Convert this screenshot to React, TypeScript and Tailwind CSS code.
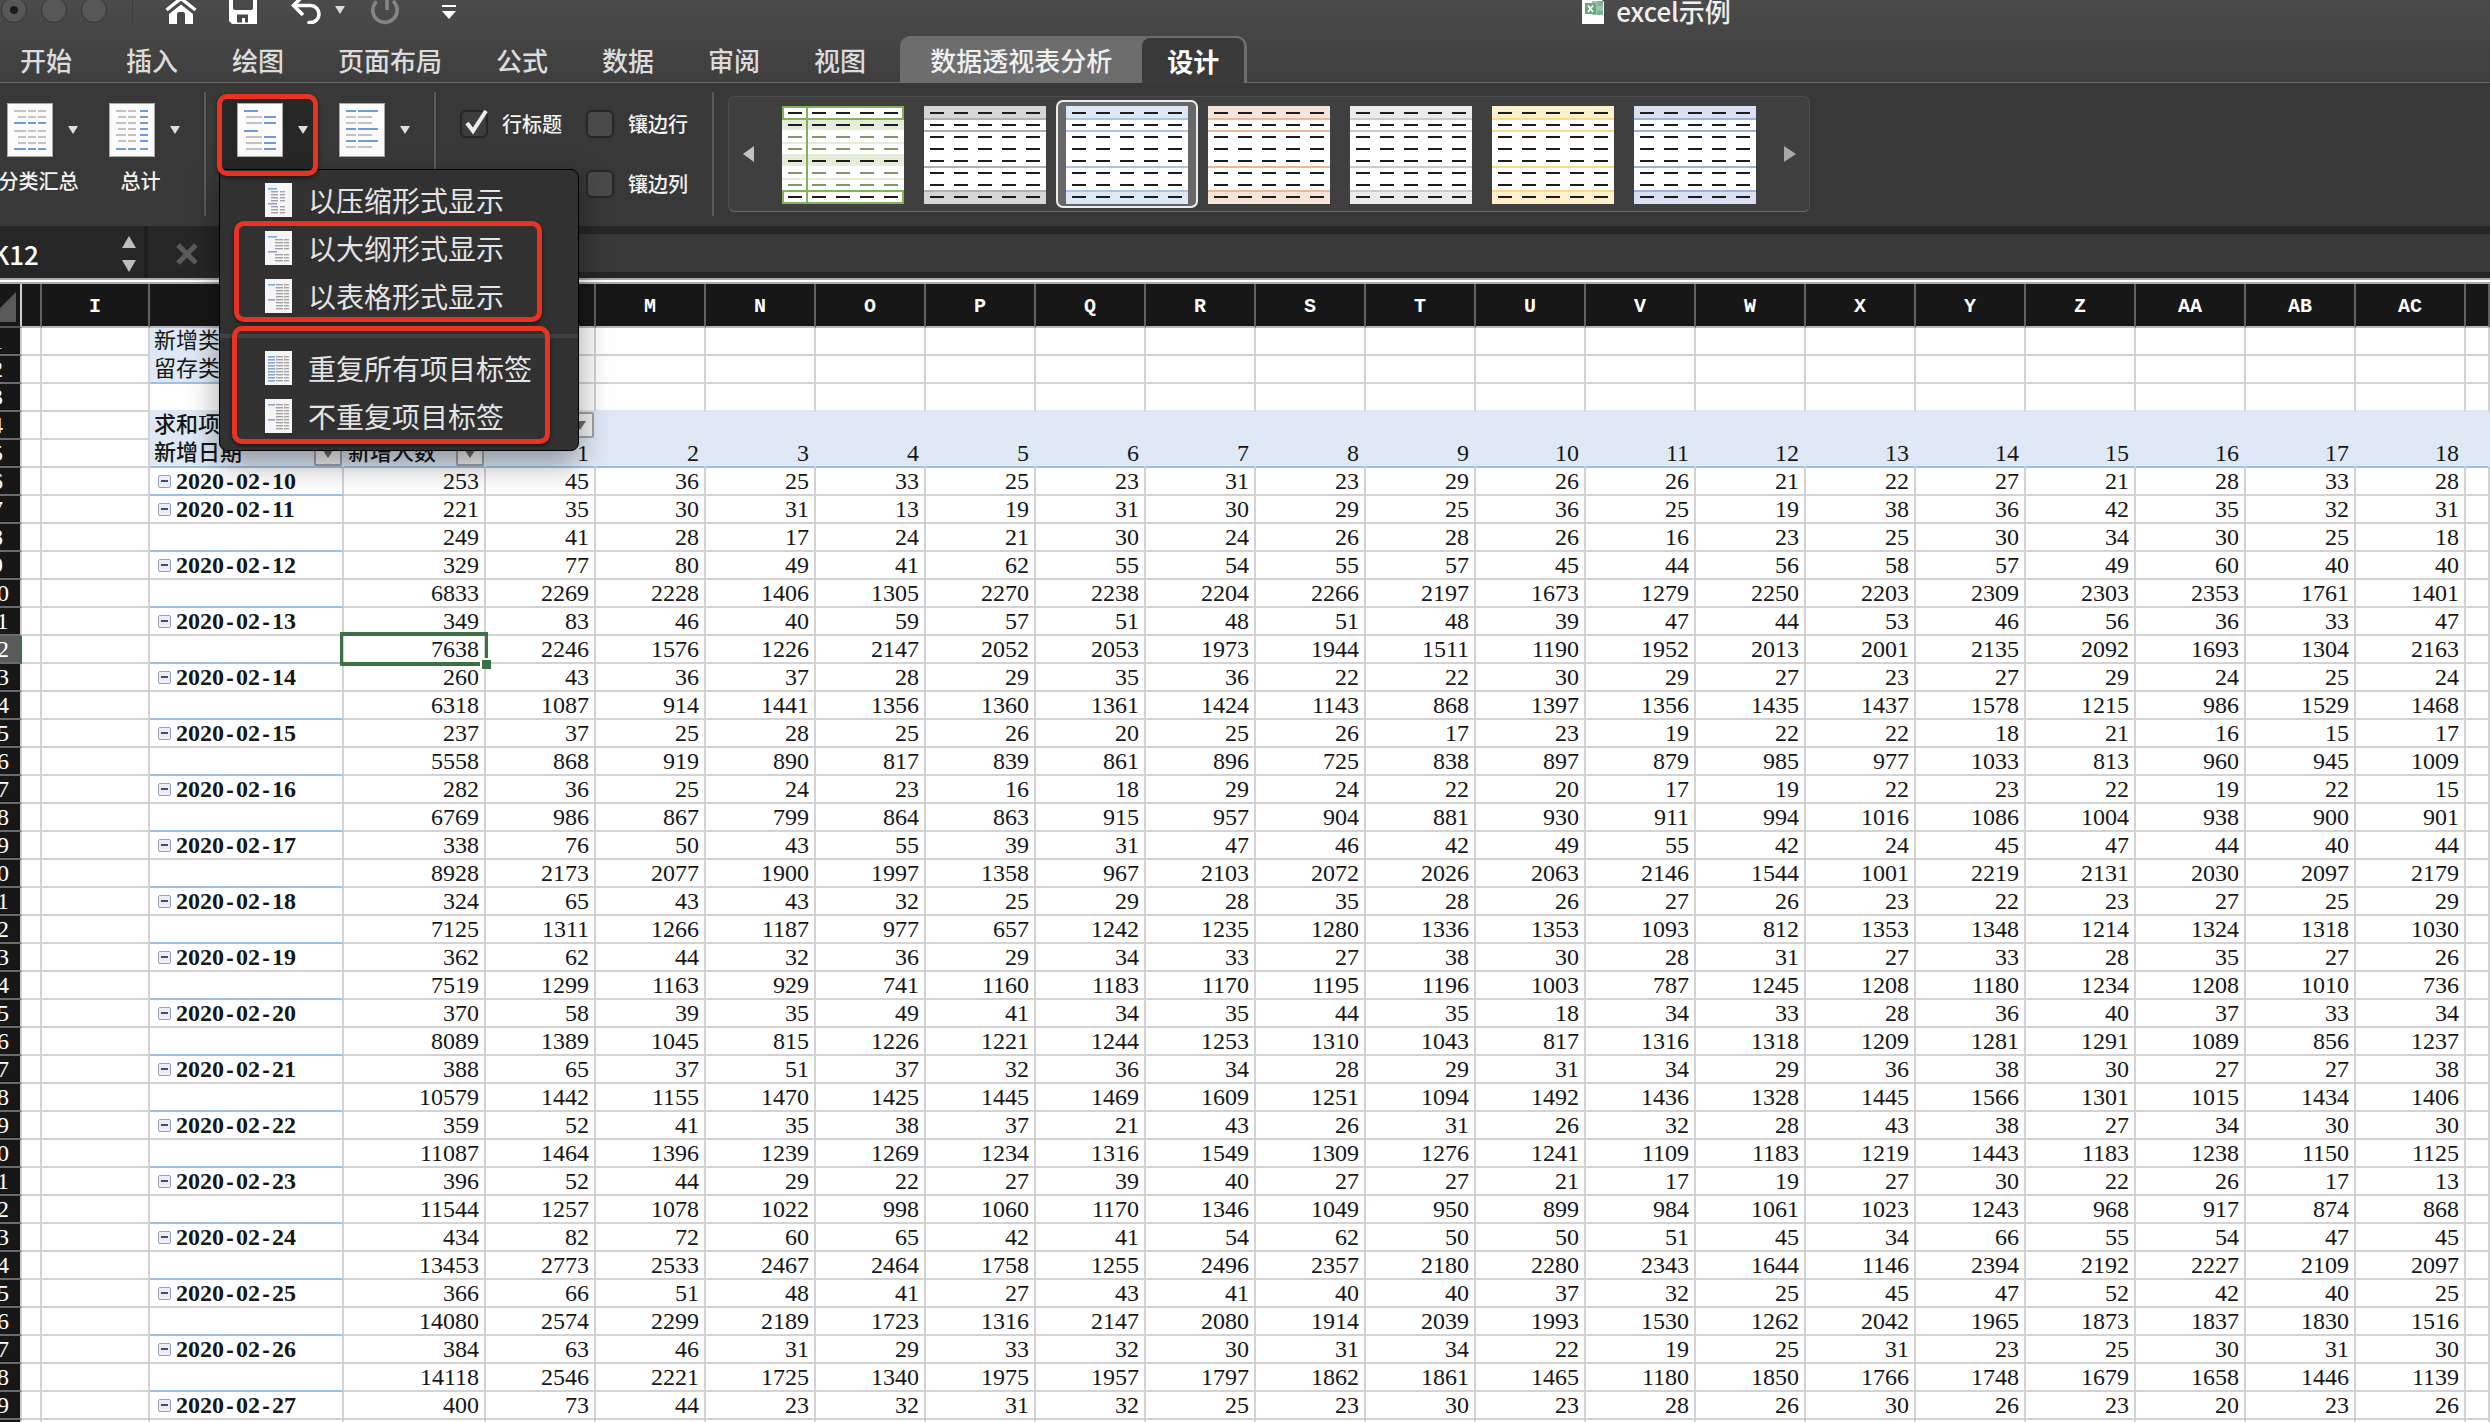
import type { ReactNode } from "react";

const COLUMNS = ["H", "I", "J", "K", "L", "M", "N", "O", "P", "Q", "R", "S", "T", "U", "V", "W", "X", "Y", "Z", "AA", "AB", "AC", "AD"];

const DATA = `253 45 36 25 33 25 23 31 23 29 26 26 21 22 27 21 28 33 28
221 35 30 31 13 19 31 30 29 25 36 25 19 38 36 42 35 32 31
249 41 28 17 24 21 30 24 26 28 26 16 23 25 30 34 30 25 18
329 77 80 49 41 62 55 54 55 57 45 44 56 58 57 49 60 40 40
6833 2269 2228 1406 1305 2270 2238 2204 2266 2197 1673 1279 2250 2203 2309 2303 2353 1761 1401
349 83 46 40 59 57 51 48 51 48 39 47 44 53 46 56 36 33 47
7638 2246 1576 1226 2147 2052 2053 1973 1944 1511 1190 1952 2013 2001 2135 2092 1693 1304 2163
260 43 36 37 28 29 35 36 22 22 30 29 27 23 27 29 24 25 24
6318 1087 914 1441 1356 1360 1361 1424 1143 868 1397 1356 1435 1437 1578 1215 986 1529 1468
237 37 25 28 25 26 20 25 26 17 23 19 22 22 18 21 16 15 17
5558 868 919 890 817 839 861 896 725 838 897 879 985 977 1033 813 960 945 1009
282 36 25 24 23 16 18 29 24 22 20 17 19 22 23 22 19 22 15
6769 986 867 799 864 863 915 957 904 881 930 911 994 1016 1086 1004 938 900 901
338 76 50 43 55 39 31 47 46 42 49 55 42 24 45 47 44 40 44
8928 2173 2077 1900 1997 1358 967 2103 2072 2026 2063 2146 1544 1001 2219 2131 2030 2097 2179
324 65 43 43 32 25 29 28 35 28 26 27 26 23 22 23 27 25 29
7125 1311 1266 1187 977 657 1242 1235 1280 1336 1353 1093 812 1353 1348 1214 1324 1318 1030
362 62 44 32 36 29 34 33 27 38 30 28 31 27 33 28 35 27 26
7519 1299 1163 929 741 1160 1183 1170 1195 1196 1003 787 1245 1208 1180 1234 1208 1010 736
370 58 39 35 49 41 34 35 44 35 18 34 33 28 36 40 37 33 34
8089 1389 1045 815 1226 1221 1244 1253 1310 1043 817 1316 1318 1209 1281 1291 1089 856 1237
388 65 37 51 37 32 36 34 28 29 31 34 29 36 38 30 27 27 38
10579 1442 1155 1470 1425 1445 1469 1609 1251 1094 1492 1436 1328 1445 1566 1301 1015 1434 1406
359 52 41 35 38 37 21 43 26 31 26 32 28 43 38 27 34 30 30
11087 1464 1396 1239 1269 1234 1316 1549 1309 1276 1241 1109 1183 1219 1443 1183 1238 1150 1125
396 52 44 29 22 27 39 40 27 27 21 17 19 27 30 22 26 17 13
11544 1257 1078 1022 998 1060 1170 1346 1049 950 899 984 1061 1023 1243 968 917 874 868
434 82 72 60 65 42 41 54 62 50 50 51 45 34 66 55 54 47 45
13453 2773 2533 2467 2464 1758 1255 2496 2357 2180 2280 2343 1644 1146 2394 2192 2227 2109 2097
366 66 51 48 41 27 43 41 40 40 37 32 25 45 47 52 42 40 25
14080 2574 2299 2189 1723 1316 2147 2080 1914 2039 1993 1530 1262 2042 1965 1873 1837 1830 1516
384 63 46 31 29 33 32 30 31 34 22 19 25 31 23 25 30 31 30
14118 2546 2221 1725 1340 1975 1957 1797 1862 1861 1465 1180 1850 1766 1748 1679 1658 1446 1139
400 73 44 23 32 31 32 25 23 30 23 28 26 30 26 23 20 23 26`
  .split("\n")
  .map((line) => line.split(" "));

/* ---------- icons ---------- */

type Bar = [x: number, y: number, w: number, blue?: boolean];

const subtotalBars: Bar[] = [7, 13, 19, 27, 33, 39, 45].flatMap((y): Bar[] => {
  const blue = y === 19 || y === 45;
  const wide = blue || y === 7 || y === 27;
  return [wide ? [7, y, 12, blue] : [11, y, 8], [21, y, 8, blue], [31, y, 8, blue]];
});

const totalBars: Bar[] = [7, 13, 19, 25, 31, 37, 45].flatMap((y, i): Bar[] => {
  const last = y === 45;
  return [i % 2 ? [9, y, 8] : [7, y, 10, last], [19, y, 8, last], [31, y, 8, true]];
});

const layoutBars: Bar[] = [
  [7, 7, 14, true],
  [7, 27, 14, true],
  ...[13, 19, 33, 39, 45].flatMap((y): Bar[] => [[9, y, 16], [27, y, 12, true]]),
];

const blankRowBars: Bar[] = [7, 13, 19, 25, 31, 37, 43].flatMap((y): Bar[] => {
  const blue = y === 7 || y === 25 || y === 37;
  return [[7, y, 10, blue], [19, y, blue ? 20 : 14, blue]];
});

function PageIcon({ bars }: { bars: Bar[] }) {
  return (
    <svg width="46" height="54" viewBox="0 0 46 54" aria-hidden="true" className="shrink-0">
      <rect x="0.5" y="0.5" width="45" height="53" fill="#fbfbfb" stroke="#a9a9a9" />
      {bars.map(([x, y, w, blue], i) => (
        <rect key={i} x={x} y={y} width={w} height="2" fill={blue ? "#6f9bd8" : "#c3c3c3"} />
      ))}
    </svg>
  );
}

type MenuBars = { blue: [number, number][]; blueWidth: number; gray: number[]; cols: [number, number][] };

const TABULAR_ROWS = [5, 8, 11, 14, 17, 20, 23, 26, 29];

const menuIcons: Record<string, MenuBars> = {
  compact: { blue: [[3, 5], [3, 20]], blueWidth: 9, gray: [8, 11, 14, 17, 23, 26, 29], cols: [[6, 7], [15, 5]] },
  outline: { blue: [[3, 5], [3, 20]], blueWidth: 9, gray: [8, 11, 14, 17, 23, 26, 29], cols: [[10, 8], [19, 5]] },
  tabular: { blue: [[3, 5], [3, 20]], blueWidth: 7, gray: TABULAR_ROWS, cols: [[11, 7], [19, 5]] },
  repeat: { blue: TABULAR_ROWS.map((y) => [3, y]), blueWidth: 7, gray: TABULAR_ROWS, cols: [[11, 7], [19, 5]] },
};

function MenuIcon({ kind }: { kind: string }) {
  const bars = menuIcons[kind];
  return (
    <svg width="27" height="34" viewBox="0 0 27 34" aria-hidden="true" className="shrink-0">
      <rect width="27" height="34" fill="#f6f6f6" />
      {bars.gray.flatMap((y) =>
        bars.cols.map(([x, w]) => <rect key={`${x}-${y}`} x={x} y={y} width={w} height="1.4" fill="#a2a2a2" />),
      )}
      {bars.blue.map(([x, y]) => (
        <rect key={y} x={x} y={y} width={bars.blueWidth} height="1.6" fill="#7fa6e0" />
      ))}
    </svg>
  );
}

function Caret() {
  return (
    <svg width="10" height="8" viewBox="0 0 10 8" aria-hidden="true" className="shrink-0">
      <path d="M0 0h10L5 8z" fill="#dedede" />
    </svg>
  );
}

function HomeIcon() {
  return (
    <svg width="32" height="28" viewBox="0 0 32 28" fill="none" aria-hidden="true">
      <path d="M1.5 14 16 2.5 30.5 14" stroke="#fff" strokeWidth="3.4" />
      <path d="M4 18 16 8.5 28 18v10h-8V18a2 2 0 0 0-2-2h-4a2 2 0 0 0-2 2v10H4z" fill="#fff" />
    </svg>
  );
}

function SaveIcon() {
  return (
    <svg width="28" height="28" viewBox="0 0 28 28" aria-hidden="true">
      <path
        d="M0 0h28v28H3l-3-3zM4 2v10a2 2 0 0 0 2 2h16a2 2 0 0 0 2-2V2zM8 26.5h5V22h3v4.500h3V18.500H8z"
        fill="#fff"
        fillRule="evenodd"
      />
    </svg>
  );
}

function UndoIcon() {
  return (
    <svg width="31" height="28" viewBox="0 0 31 28" fill="none" stroke="#fff" strokeWidth="3.6" aria-hidden="true">
      <path d="M12 0 2.5 9.5 12 19" />
      <path d="M3 9.5h16.5a8.5 8.5 0 0 1 0 17H18" strokeLinecap="round" />
    </svg>
  );
}

function RedoIcon() {
  return (
    <svg width="28" height="32" viewBox="0 0 28 32" fill="none" stroke="#858585" strokeWidth="3.6" aria-hidden="true">
      <path d="M4.5 8.5A12.2 12.2 0 1 0 23 8" strokeLinecap="round" />
      <path d="M16 16V4h12" />
    </svg>
  );
}

function ExcelFileIcon() {
  return (
    <svg width="22" height="28" viewBox="0 0 22 28" aria-hidden="true">
      <path d="M0 0h16l6 6v22H0z" fill="#fff" />
      <path d="M10 5h11v14H10z" fill="#9cc8a9" />
      <path d="M15.5 5H21v5h-5.5zM15.5 14.5H21V19h-5.5z" fill="#7db38d" />
      <rect x="3" y="7" width="11" height="11" fill="#68a67b" />
      <path d="m6 9.5 5 6.5m0-6.5L6 16" stroke="#fff" strokeWidth="1.7" />
    </svg>
  );
}

/* ---------- title bar and tabs ---------- */

function TitleBar() {
  return (
    <div className="flex h-9 items-start">
      <div className="flex h-5 items-center pl-px">
        <div className="flex items-center gap-[14px]">
          <button aria-label="关闭" className="flex size-[26px] items-center justify-center rounded-full border border-[#363636] bg-[#575757]">
            <span className="size-2 rounded-full bg-[#1a1a1a]" />
          </button>
          <button aria-label="最小化" className="size-[26px] rounded-full border border-[#363636] bg-[#575757]" />
          <button aria-label="缩放" className="size-[26px] rounded-full border border-[#363636] bg-[#575757]" />
        </div>
        <span className="ml-[25px] h-8 w-px bg-[#3c3c3c]" />
        <button aria-label="主页" className="ml-8"><HomeIcon /></button>
        <button aria-label="保存" className="ml-8"><SaveIcon /></button>
        <button aria-label="撤消" className="ml-[34px]"><UndoIcon /></button>
        <button aria-label="撤消选项" className="ml-[13px]"><Caret /></button>
        <button aria-label="恢复" className="ml-[26px]"><RedoIcon /></button>
        <button aria-label="自定义工具栏" className="ml-[43px]">
          <svg width="14" height="18" viewBox="0 0 14 18" fill="#fff" aria-hidden="true">
            <path d="M0 4h14v2H0zM0 10h14l-7 8z" />
          </svg>
        </button>
      </div>
      <h1 className="flex h-5 flex-1 items-center justify-center gap-3 pl-[367px] text-[26px] font-medium whitespace-nowrap text-[#efefef]">
        <ExcelFileIcon />
        excel示例
      </h1>
    </div>
  );
}

function Tabs() {
  return (
    <nav className="flex h-[47px] items-stretch border-b border-[#686868] pl-5 text-[26px] leading-[48px] font-medium text-[#dcdcdc]">
      <div className="flex gap-[54px] pr-[34px]">
        {["开始", "插入", "绘图", "页面布局", "公式", "数据", "审阅", "视图"].map((name) => (
          <button key={name} className="whitespace-nowrap">{name}</button>
        ))}
      </div>
      <div className="-mb-px flex rounded-t-[10px] bg-[#6d6d6d] pr-[3px]">
        <button className="px-[30px] whitespace-nowrap text-[#f0f0f0]">数据透视表分析</button>
        <button className="mt-[2px] rounded-t-lg bg-[#3a3a3a] px-[25px] leading-[44px] font-bold whitespace-nowrap text-white">设计</button>
      </div>
    </nav>
  );
}

/* ---------- ribbon ---------- */

function Separator() {
  return <span className="mt-[9px] mb-[10px] w-[2px] shrink-0 self-stretch bg-[#5b5b5b]" />;
}

function RibbonButton({ bars, label }: { bars: Bar[]; label: string }) {
  return (
    <button className="mt-5 flex w-[71px] shrink-0 flex-col items-center gap-[10px]">
      <span className="flex items-center gap-[15px]">
        <PageIcon bars={bars} />
        <Caret />
      </span>
      <span className="pr-2 text-[20px] leading-7 font-medium whitespace-nowrap text-[#f2f2f2]">{label}</span>
    </button>
  );
}

function Marker({ className }: { className: string }) {
  return (
    <span
      className={`pointer-events-none absolute rounded-[10px] border-[5px] border-[#e83323] shadow-[0_2px_4px_rgba(0,0,0,0.5)] ${className}`}
    />
  );
}

function MenuItem({ kind, children }: { kind: string; children: ReactNode }) {
  return (
    <button role="menuitem" className="flex h-12 w-full items-center gap-4 pl-[45px] text-left text-[28px] leading-[48px] whitespace-nowrap text-[#e4e4e4]">
      <MenuIcon kind={kind} />
      {children}
    </button>
  );
}

function LayoutDropdown() {
  return (
    <div className="relative z-10 mt-3 ml-[13px] shrink-0">
      <button aria-label="报表布局" aria-expanded="true" className="flex h-[80px] items-start gap-[15px] rounded-lg bg-[#272727] pt-2 pr-[7px] pl-[18px]">
        <PageIcon bars={layoutBars} />
        <span className="flex h-[54px] items-center"><Caret /></span>
      </button>
      <div role="menu" className="absolute top-[74px] left-0 w-[360px] rounded-tr-lg rounded-b-lg border border-black bg-[#313131] pt-[6px] pb-[10px] shadow-[0_12px_32px_rgba(0,0,0,0.38)]">
        <MenuItem kind="compact">以压缩形式显示</MenuItem>
        <div className="relative">
          <MenuItem kind="outline">以大纲形式显示</MenuItem>
          <MenuItem kind="tabular">以表格形式显示</MenuItem>
          <Marker className="-top-[3px] -bottom-[2px] left-[14px] w-[308px]" />
        </div>
        <div className="mt-[14px] mb-[6px] h-1 bg-[#424242]" />
        <div className="relative">
          <MenuItem kind="repeat">重复所有项目标签</MenuItem>
          <MenuItem kind="tabular">不重复项目标签</MenuItem>
          <Marker className="-top-[18px] -bottom-1 left-3 w-[318px]" />
        </div>
      </div>
      <Marker className="-top-px -left-[2px] h-[82px] w-[101px]" />
    </div>
  );
}

function CheckOption({ label, checked = false }: { label: string; checked?: boolean }) {
  return (
    <label className="flex h-7 items-center gap-[14px] text-[20px] leading-7 font-medium whitespace-nowrap text-[#f4f4f4]">
      <span className="relative flex">
        <input
          type="checkbox"
          defaultChecked={checked}
          className="size-7 appearance-none rounded-[6px] border-2 border-[#262626] bg-[#4a4a4a] checked:bg-[#3d3d3d]"
        />
        {checked && (
          <svg width="28" height="28" viewBox="0 0 28 28" fill="none" aria-hidden="true" className="pointer-events-none absolute inset-0">
            <path d="m7 13 6 8L26 1" stroke="#ececec" strokeWidth="4" />
          </svg>
        )}
      </span>
      {label}
    </label>
  );
}

const styleThumbs = [
  { name: "灰色", fill: "#d6d6d6", line: "#b0b0b0" },
  { name: "蓝色", fill: "#dde8f5", line: "#a9c4e4", selected: true },
  { name: "橙色", fill: "#f8e3d8", line: "#edb898" },
  { name: "浅灰", fill: "#ebebeb", line: "#cbcbcb" },
  { name: "金色", fill: "#fdf0cd", line: "#fadb86" },
  { name: "靛蓝", fill: "#d9e0f1", line: "#9db1da" },
];

const THUMB_ROWS = [0, 1, 2, 3, 4, 5, 6, 7];
const THUMB_COLS = [0, 1, 2, 3, 4];

function Dashes({ light = [] }: { light?: number[] }) {
  return (
    <>
      {THUMB_ROWS.flatMap((r) =>
        THUMB_COLS.map((c) => (
          <rect key={`${r}-${c}`} x={6 + c * 24} y={6 + r * 12} width="14" height="2" fill={light.includes(r) ? "#7d9a62" : "#1c1c1c"} />
        )),
      )}
    </>
  );
}

function Thumb({ fill, line }: { fill: string; line: string }) {
  return (
    <svg width="122" height="98" viewBox="0 0 122 98" aria-hidden="true">
      <rect width="122" height="98" fill="#fff" />
      <rect width="122" height="12" fill={fill} />
      <rect y="86" width="122" height="12" fill={fill} />
      {[12, 24, 60, 84].map((y) => (
        <rect key={y} y={y} width="122" height="2" fill={line} />
      ))}
      <Dashes />
    </svg>
  );
}

function GreenThumb() {
  return (
    <svg width="122" height="98" viewBox="0 0 122 98" aria-hidden="true">
      <rect width="122" height="98" fill="#fff" />
      <rect y="13" width="122" height="11" fill="#e3edda" />
      <rect y="48" width="122" height="12" fill="#e3edda" />
      <rect y="36" width="122" height="2" fill="#e3edda" />
      <rect y="72" width="122" height="2" fill="#e3edda" />
      <path d="M1 1h120v12H1zM1 85h120v12H1zM25 1v96" fill="none" stroke="#83b25d" strokeWidth="2" />
      <Dashes light={[2, 3, 5, 6]} />
    </svg>
  );
}

function Gallery() {
  return (
    <div className="mt-[13px] ml-[14px] flex h-[116px] shrink-0 items-center rounded-[6px] border border-[#4c4c4c] border-b-[#666] bg-[#3f3f3f] pr-[13px] pl-[14px]">
      <button aria-label="上一组样式">
        <svg width="11" height="16" viewBox="0 0 11 16" aria-hidden="true"><path d="M11 0v16L0 8z" fill="#c2c2c2" /></svg>
      </button>
      <div className="mx-[18px] flex">
        <button aria-label="绿色" className="flex h-[108px] w-[142px] items-center justify-center pt-[2px]"><GreenThumb /></button>
        {styleThumbs.map((t) => (
          <button
            key={t.name}
            aria-label={t.name}
            aria-pressed={!!t.selected}
            className={`flex h-[108px] w-[142px] items-center justify-center pt-[2px] ${t.selected ? "rounded-[7px] border-2 border-[#ededed] bg-[#676767]" : ""}`}
          >
            <Thumb fill={t.fill} line={t.line} />
          </button>
        ))}
      </div>
      <button aria-label="下一组样式">
        <svg width="12" height="16" viewBox="0 0 12 16" aria-hidden="true"><path d="M0 0v16l12-8z" fill="#a8a8a8" /></svg>
      </button>
    </div>
  );
}

function Ribbon() {
  return (
    <div className="flex h-[143px] shrink-0 items-start bg-[#383838] pl-[7px]">
      <div className="mr-6 flex gap-[31px]">
        <RibbonButton bars={subtotalBars} label="分类汇总" />
        <RibbonButton bars={totalBars} label="总计" />
      </div>
      <Separator />
      <LayoutDropdown />
      <button aria-label="空行" className="mt-5 mr-6 ml-6 flex shrink-0 items-center gap-[15px]">
        <PageIcon bars={blankRowBars} />
        <Caret />
      </button>
      <Separator />
      <div className="mt-[27px] mr-6 ml-6 grid shrink-0 grid-cols-2 gap-x-6 gap-y-8">
        <CheckOption label="行标题" checked />
        <CheckOption label="镶边行" />
        <CheckOption label="列标题" checked />
        <CheckOption label="镶边列" />
      </div>
      <Separator />
      <Gallery />
    </div>
  );
}

/* ---------- formula bar ---------- */

function FormulaBar() {
  return (
    <>
      <div className="flex h-[52px] shrink-0 bg-[#262626]">
        <div className="flex w-[148px] shrink-0 items-center border-r-4 border-[#1f1f1f] pt-1">
          <input
            aria-label="名称框"
            defaultValue="K12"
            className="-ml-2 w-0 flex-1 bg-transparent text-[26px] leading-8 font-medium text-white outline-none"
          />
          <div className="mr-2 flex flex-col gap-3">
            <button aria-label="上一个">
              <svg width="14" height="12" viewBox="0 0 14 12" className="block" aria-hidden="true"><path d="M7 0l7 12H0z" fill="#bdbdbd" /></svg>
            </button>
            <button aria-label="下一个">
              <svg width="14" height="12" viewBox="0 0 14 12" className="block" aria-hidden="true"><path d="M0 0h14L7 12z" fill="#bdbdbd" /></svg>
            </button>
          </div>
        </div>
        <button aria-label="取消" className="ml-7 pt-1">
          <svg width="22" height="22" viewBox="0 0 22 22" aria-hidden="true">
            <path d="M2 2l18 18M20 2 2 20" stroke="#5b5b5b" strokeWidth="5" />
          </svg>
        </button>
        <input aria-label="编辑栏" className="mt-2 mb-[6px] ml-[200px] min-w-0 flex-1 bg-[#383838] px-2 text-[24px] text-white outline-none" />
      </div>
      <div className="h-[6px] shrink-0 border-y-2 border-[#a9a9a9] bg-white" />
    </>
  );
}

/* ---------- sheet ---------- */

function FilterButton({ label }: { label: string }) {
  return (
    <button aria-label={label} className="absolute right-0 bottom-0 flex h-[26px] w-7 items-center justify-center rounded-[2px] border-2 border-[#a3a3a3] bg-[#f3f3f3]">
      <svg width="12" height="9" viewBox="0 0 12 9" aria-hidden="true"><path d="M0 0h12L6 9z" fill="#6d6d6d" /></svg>
    </button>
  );
}

function DateCell({ date }: { date: string }) {
  const [year, month, day] = date.split("-");
  const dash = <span className="font-['Liberation_Mono'] text-[20px] leading-none">-</span>;
  return (
    <span className="flex items-center gap-[5px]">
      <button aria-label={`折叠 ${date}`} className="flex size-[13px] items-center justify-center rounded-[2px] border border-[#94a2c0] bg-[#eceff4]">
        <span className="h-[2px] w-[7px] bg-[#3d4a7a]" />
      </button>
      <span>{year}{dash}{month}{dash}{day}</span>
    </span>
  );
}

const HEAD_TEXT: Record<string, string> = { J1: "新增类型", J2: "留存类型", J4: "求和项:留存", J5: "新增日期", K5: "新增人数" };

function cellText(col: string, colIndex: number, row: number) {
  const key = `${col}${row}`;
  if (HEAD_TEXT[key]) return HEAD_TEXT[key];
  if (row === 5 && colIndex >= 4 && colIndex <= 21) return String(colIndex - 3);
  if (row >= 6 && colIndex >= 3) return DATA[row - 6]?.[colIndex - 3] ?? "";
  return "";
}

function Cell({ col, index, row }: { col: string; index: number; row: number }) {
  const text = cellText(col, index, row);
  const pivotHead = (row === 4 || row === 5) && index >= 2;
  const fieldHead = row <= 2 && col === "J";
  const hasDate = col === "J" && (row === 6 || (row > 6 && row % 2 === 1 && row < 40));
  const date = hasDate ? `2020-02-${row === 6 ? 10 : 11 + (row - 7) / 2}` : "";

  let tone = "border-[#d3d3d3] bg-white";
  if (pivotHead || fieldHead) {
    tone = row === 5 || row === 2
      ? "border-b-[#a0c0e2] border-r-[#dfe9f5] bg-[#dfe9f5]"
      : "border-[#dfe9f5] bg-[#dfe9f5]";
  } else if (row === 3 && index >= 2) tone = "border-r-[#d3d3d3] border-b-[#dfe9f5] bg-white";
  else if (col === "J" && row >= 6 && row % 2 === 0) tone = "border-r-[#d3d3d3] border-b-[#a0c0e2] bg-white";

  const label = HEAD_TEXT[`${col}${row}`];
  const align = label ? "pl-1 text-left text-[22px]" : hasDate ? "pl-2 text-left text-[24px] font-bold" : "pr-[5px] text-right text-[24px]";
  const weight = label && pivotHead ? "font-medium" : "";
  const filter = (row === 5 && (col === "J" || col === "K")) || (row === 4 && col === "L");
  const selected = row === 12 && col === "K";

  return (
    <td className={`relative h-7 border-r-2 border-b-2 p-0 leading-[26px] whitespace-nowrap text-[#161616] ${tone} ${align} ${weight}`}>
      {hasDate ? <DateCell date={date} /> : text}
      {filter && <FilterButton label={`筛选 ${col}${row}`} />}
      {selected && (
        <span className="pointer-events-none absolute -inset-1 z-[1] border-[3px] border-y-4 border-[#3c7148]">
          <span className="absolute -right-[6px] -bottom-[7px] size-[11px] border-t-2 border-l-2 border-white bg-[#3c7148]" />
        </span>
      )}
    </td>
  );
}

function Sheet() {
  const rows = Array.from({ length: 40 }, (_, i) => i + 1);
  return (
    <div className="flex-1 overflow-hidden bg-white font-['Liberation_Serif','Noto_Sans_CJK_SC',serif]">
      <table className="-ml-[26px] w-[calc(100%+26px)] table-fixed border-separate border-spacing-0">
        <colgroup>
          <col className="w-12" />
          <col className="w-5" />
          <col className="w-[108px]" />
          <col className="w-[194px]" />
          <col className="w-[142px]" />
          {COLUMNS.slice(4, -1).map((c) => (
            <col key={c} className="w-[110px]" />
          ))}
          <col />
        </colgroup>
        <thead>
          <tr className="h-11 font-['Liberation_Mono'] text-[20px] leading-[38px] text-white">
            <th aria-label="全选" className="h-11 border-r-2 border-b-2 border-[#cfcfcf] border-b-[#555] bg-[#171717] p-0">
              <svg width="30" height="30" viewBox="0 0 30 30" className="mt-1 ml-3" aria-hidden="true"><path d="M30 0v30H0z" fill="#5a5a5a" /></svg>
            </th>
            {COLUMNS.map((c) => (
              <th key={c} scope="col" className="h-11 border-r-2 border-b-2 border-[#606060] border-b-[#b9b9b9] bg-[#171717] px-0 pt-1 pb-0 font-bold">
                {c === "H" || c === "AD" ? "" : c}
              </th>
            ))}
          </tr>
        </thead>
        <tbody>
          {rows.map((row) => (
            <tr key={row} className="h-7">
              <th
                scope="row"
                className={`h-7 border-r-2 border-b-2 border-b-[#6c6c6c] p-0 text-center text-[24px] leading-[26px] font-normal text-white ${
                  row === 12 ? "border-r-[#3c7148] bg-[#5a5a5a]" : "border-r-[#cfcfcf] bg-[#171717]"
                }`}
              >
                {row}
              </th>
              {COLUMNS.map((c, i) => (
                <Cell key={c} col={c} index={i} row={row} />
              ))}
            </tr>
          ))}
        </tbody>
      </table>
    </div>
  );
}

export default function App() {
  return (
    <div className="flex h-screen flex-col overflow-hidden bg-[#383838] font-['Noto_Sans_CJK_SC','Noto_Sans',sans-serif]">
      <header className="shrink-0 bg-linear-to-b from-[#4b4b4b] to-[#3e3e3e]">
        <TitleBar />
        <Tabs />
      </header>
      <Ribbon />
      <FormulaBar />
      <Sheet />
    </div>
  );
}
